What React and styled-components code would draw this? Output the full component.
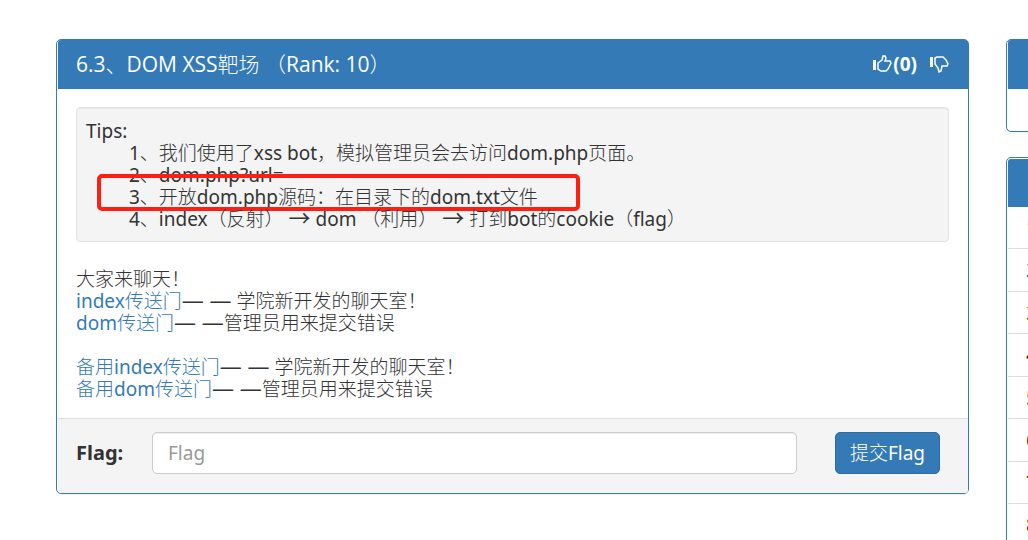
import React from "react";
import styled, { createGlobalStyle } from "styled-components";

const Global = createGlobalStyle`
  * { box-sizing: border-box; }
  body {
    margin: 0;
    background: #fff;
    color: #333;
    font: 19px/22px "Noto Sans", "Noto Sans CJK SC Light", "Noto Sans CJK SC DemiLight", "Noto Sans CJK SC", sans-serif;
    overflow: hidden;
  }
`;

const Viewport = styled.div`
  overflow: hidden;
  height: 100vh;
`;

const Columns = styled.div`
  display: grid;
  grid-template-columns: minmax(0, 1fr) 300px;
  gap: 37px;
  align-items: start;
  width: calc(100% + 278px);
  padding: 39px 0 0 56px;
`;

const Sidebar = styled.aside`
  display: grid;
  gap: 25px;
`;

const Panel = styled.section`
  border: 1px solid #337ab7;
  border-radius: 5px;
  padding: ${(p) => (p.$inset ? "1px 0 0 1px" : "0 0 0 1px")};
  background: #fff;
  box-shadow: 0 1px 1px rgba(0, 0, 0, 0.05);
`;

const PanelHeader = styled.header`
  display: flex;
  align-items: center;
  justify-content: space-between;
  height: ${(p) => (p.$short ? "48px" : "49px")};
  padding: 0 19px 2px 18px;
  border-radius: 3px 3px 0 0;
  background: #337ab7;
  color: #fff;
`;

const Title = styled.h1`
  margin: 0;
  font-family: "Open Sans", "Noto Sans CJK SC Light", "Noto Sans CJK SC", sans-serif;
  font-size: 21px;
  font-weight: 400;
  line-height: 22px;
  white-space: pre;
`;

const Votes = styled.div`
  display: flex;
  gap: 12px;
`;

const VoteButton = styled.button`
  display: flex;
  align-items: center;
  padding: 0;
  border: 0;
  background: none;
  color: inherit;
  font: inherit;
  font-weight: 700;
  cursor: pointer;
`;

const PanelBody = styled.div`
  min-height: 42px;
  padding: 18px 19px 18px 18px;
`;

const Tips = styled.div`
  margin-bottom: 26px;
  padding: 12px 9px 11px;
  border: 1px solid #e3e3e3;
  border-radius: 4px;
  background: #f4f4f4;
  box-shadow: inset 0 1px 1px rgba(0, 0, 0, 0.05);
`;

const TipLine = styled.div`
  position: relative;
  padding-left: 43px;
  white-space: pre;
`;

const Highlight = styled.span`
  position: absolute;
  top: -12px;
  left: 11px;
  width: 483px;
  height: 37px;
  border: 4px solid #ff1f12;
  border-radius: 5px;
  pointer-events: none;
`;

const Paragraph = styled.p`
  margin: 0 0 ${(p) => (p.$spaced ? "22px" : "0")};
`;

const Symbol = styled.span`
  font-family: "Open Sans", "Noto Sans CJK SC", sans-serif;
  font-size: 22px;
  line-height: 0;
`;

const Link = styled.a`
  color: #337ab7;
  text-decoration: none;
`;

const FlagForm = styled.form`
  display: grid;
  grid-template-columns: 76px minmax(0, 1fr) 105px;
  align-items: center;
  padding: 13px 28px 19px 18px;
  border-top: 1px solid #ddd;
  border-radius: 0 0 3px 3px;
  background: #f4f4f4;
`;

const Label = styled.label`
  font-size: 20px;
  font-weight: 700;
`;

const Input = styled.input`
  min-width: 0;
  height: 42px;
  margin-right: 38px;
  padding: 0 15px;
  border: 1px solid #ccc;
  border-radius: 5px;
  background: #fff;
  color: #555;
  font: inherit;
  box-shadow: inset 0 1px 1px rgba(0, 0, 0, 0.075);
  &::placeholder { color: #999; opacity: 1; }
`;

const Submit = styled.button`
  height: 42px;
  padding: 0;
  border: 1px solid #2e6da4;
  border-radius: 5px;
  background: #337ab7;
  color: #fff;
  font: inherit;
  cursor: pointer;
`;

const Ranking = styled.ol`
  margin: 0;
  padding: 0;
  list-style: none;
`;

const Rank = styled.li`
  display: flex;
  align-items: center;
  height: 42px;
  padding-left: 18px;
  border-bottom: 1px solid #ddd;
  color: ${(p) => p.$color || "#333"};
  &:nth-child(even) { height: 43px; }
`;

const ranks = ["#b0103c", "#0a6cc0", "#1c7a1c", null, null, null, null, null, null];

const ThumbUp = () => (
  <svg width="20" height="20" viewBox="0 0 20 20" fill="none" aria-hidden="true">
    <path d="M0 6h3v10H0z" fill="currentColor" />
    <path d="M5 9l4-3 1-4h2l1 2-1 3h5l1 2-3 6-2 2H8l-3-2V9z" stroke="currentColor" strokeWidth="1.5" />
  </svg>
);

const ThumbDown = () => (
  <svg width="20" height="20" viewBox="0 0 20 20" fill="none" aria-hidden="true">
    <path d="M1 3h3v10H1z" fill="currentColor" />
    <path d="M6 4l2-1h6l3 3 2 4-1 2h-5l-1 5-2 1-1-4-3-4z" stroke="currentColor" strokeWidth="1.5" />
  </svg>
);

export default function App() {
  return (
    <Viewport>
      <Global />
      <Columns>
        <Panel>
          <PanelHeader>
            <Title>6.3、DOM XSS靶场 （Rank: 10）</Title>
            <Votes>
              <VoteButton type="button" aria-label="Like"><ThumbUp />(0)</VoteButton>
              <VoteButton type="button" aria-label="Dislike"><ThumbDown /></VoteButton>
            </Votes>
          </PanelHeader>
          <PanelBody>
            <Tips>
              <div>Tips:</div>
              <TipLine>1、我们使用了xss bot，模拟管理员会去访问dom.php页面。</TipLine>
              <TipLine>2、dom.php?url=</TipLine>
              <TipLine>3、开放dom.php源码：在目录下的dom.txt文件<Highlight /></TipLine>
              <TipLine>4、index（反射） <Symbol>→</Symbol> dom （利用） <Symbol>→</Symbol> 打到bot的cookie（flag）</TipLine>
            </Tips>
            <Paragraph>大家来聊天！</Paragraph>
            <Paragraph><Link href="#index">index传送门</Link><Symbol>— —</Symbol> 学院新开发的聊天室！</Paragraph>
            <Paragraph $spaced><Link href="#dom">dom传送门</Link><Symbol>— —</Symbol>管理员用来提交错误</Paragraph>
            <Paragraph><Link href="#index2">备用index传送门</Link><Symbol>— —</Symbol> 学院新开发的聊天室！</Paragraph>
            <Paragraph><Link href="#dom2">备用dom传送门</Link><Symbol>— —</Symbol>管理员用来提交错误</Paragraph>
          </PanelBody>
          <FlagForm onSubmit={(e) => e.preventDefault()}>
            <Label htmlFor="flag">Flag:</Label>
            <Input id="flag" placeholder="Flag" />
            <Submit type="submit">提交Flag</Submit>
          </FlagForm>
        </Panel>
        <Sidebar>
          <Panel>
            <PanelHeader />
            <PanelBody />
          </Panel>
          <Panel $inset>
            <PanelHeader $short />
            <Ranking>
              {ranks.map((color, i) => (
                <Rank key={i} $color={color}>{i + 1}</Rank>
              ))}
            </Ranking>
          </Panel>
        </Sidebar>
      </Columns>
    </Viewport>
  );
}
